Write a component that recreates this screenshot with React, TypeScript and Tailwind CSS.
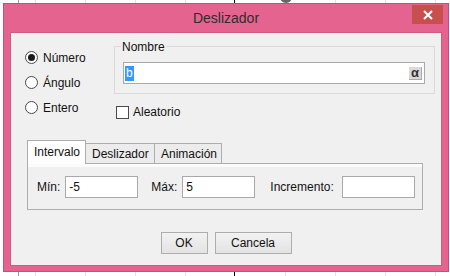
import React from "react";

function Radio({ checked, label }: { checked?: boolean; label: string }) {
  return (
    <div className="flex h-[25px] items-center">
      <div className="flex h-[13px] w-[13px] items-center justify-center rounded-full border border-[#4a4a4a] bg-white">
        {checked && <div className="h-[7px] w-[7px] rounded-full bg-[#1a1a1a]" />}
      </div>
      <span className="ml-[5px] text-[12px] leading-[14px] text-[#111]">{label}</span>
    </div>
  );
}

function Field({ value, w }: { value: string; w: string }) {
  return (
    <div className={`flex h-[22px] items-center border border-[#a9a9a9] bg-white pl-[3px] text-[12px] text-[#111] ${w}`}>
      {value}
    </div>
  );
}

export default function App() {
  return (
    <div className="relative h-[276px] w-[450px] overflow-hidden bg-white font-['Liberation_Sans',Arial,sans-serif]">
      <svg className="absolute inset-0" width="450" height="276">
        {[35, 85, 135, 185, 285, 335, 385, 435].map((x) => (
          <line key={x} x1={x + 0.5} y1="0" x2={x + 0.5} y2="276" stroke="#e2e2e2" strokeWidth="1" />
        ))}
        <line x1="18.5" y1="0" x2="18.5" y2="276" stroke="#9a9a9a" strokeWidth="1" />
        <line x1="234.5" y1="0" x2="234.5" y2="276" stroke="#000" strokeWidth="1" />
        <circle cx="286" cy="-3" r="6" fill="#666" />
      </svg>

      <div className="absolute left-[3px] top-[3px] flex h-[269px] w-[446px] flex-col border border-[#c25179] bg-[#e5648f]">
        <div className="relative h-[28px] text-center text-[14px] leading-[28px] text-[#2e2e2e]">
          Deslizador
          <div className="absolute right-[5px] top-[1px] flex h-[19px] w-[31px] items-center justify-center bg-[#c7504f]">
            <svg width="10" height="10" viewBox="0 0 10 10">
              <path d="M1 1 L9 9 M9 1 L1 9" stroke="#fff" strokeWidth="2" />
            </svg>
          </div>
        </div>

        <div className="ml-[6px] flex h-[234px] w-[432px] flex-col border border-[#cf5b84] bg-[#f0f0f0] pt-[12px]">
          <div className="flex">
            <div className="flex w-[103px] flex-col pl-[14px]">
              <Radio checked label="Número" />
              <Radio label="Ángulo" />
              <Radio label="Entero" />
            </div>
            <div className="flex flex-col">
              <div className="relative mt-[1px] h-[48px] w-[321px] border border-[#d9d9d9] pl-[8px] pt-[15px]">
                <span className="absolute -top-[7px] left-[6px] bg-[#f0f0f0] px-[1px] text-[12px] leading-[14px] text-[#111]">
                  Nombre
                </span>
                <div className="flex h-[22px] w-[302px] items-center border border-[#a9a9a9] bg-white pl-[1px] pr-[2px]">
                  <span className="bg-[#3399ff] px-[1px] text-[12px] leading-[15px] text-white">b</span>
                  <div className="flex-1" />
                  <div className="flex h-[13px] w-[13px] items-center justify-center border-b border-r border-[#a8a8a8] bg-[#d9d9d9] text-[13px] font-bold leading-[13px] text-[#333]">
                    α
                  </div>
                </div>
              </div>
              <div className="ml-[2px] mt-[11px] flex items-center">
                <div className="h-[13px] w-[13px] border border-[#4a4a4a] bg-white" />
                <span className="ml-[4px] text-[12px] leading-[14px] text-[#111]">Aleatorio</span>
              </div>
            </div>
          </div>

          <div className="ml-[16px] mt-[20px] flex w-[396px] flex-col">
            <div className="flex items-end">
              <div className="relative z-10 -mb-px h-[24px] w-[59px] border-l border-r border-t border-[#adadad] bg-white pl-[6px] pt-[4px] text-[12px] leading-[14px] text-[#111]">
                Intervalo
              </div>
              <div className="h-[20px] w-[69px] border-r border-t border-[#adadad] bg-[#ececec] pl-[6px] pt-[3px] text-[12px] leading-[14px] text-[#111]">
                Deslizador
              </div>
              <div className="h-[20px] w-[67px] border-r border-t border-[#adadad] bg-[#ececec] pl-[6px] pt-[3px] text-[12px] leading-[14px] text-[#111]">
                Animación
              </div>
            </div>
            <div className="flex h-[47px] flex-col border border-[#adadad] bg-[#f0f0f0]">
              <div className="h-[3px] bg-[#fbfbfb]" />
              <div className="mt-[9px] flex items-center pl-[9px] text-[12px] text-[#111]">
                <span>Mín:</span>
                <div className="ml-[5px]">
                  <Field value="-5" w="w-[73px]" />
                </div>
                <span className="ml-[13px]">Máx:</span>
                <div className="ml-[5px]">
                  <Field value="5" w="w-[73px]" />
                </div>
                <span className="ml-[15px]">Incremento:</span>
                <div className="ml-[8px]">
                  <Field value="" w="w-[73px]" />
                </div>
              </div>
            </div>
          </div>

          <div className="mt-[22px] flex justify-center gap-[7px]">
            <div className="flex h-[22px] w-[47px] items-center justify-center border border-[#adadad] bg-gradient-to-b from-[#f2f2f2] to-[#e3e3e3] text-[12px] text-[#111]">
              OK
            </div>
            <div className="flex h-[22px] w-[77px] items-center justify-center border border-[#adadad] bg-gradient-to-b from-[#f2f2f2] to-[#e3e3e3] text-[12px] text-[#111]">
              Cancela
            </div>
          </div>
        </div>
      </div>
    </div>
  );
}
